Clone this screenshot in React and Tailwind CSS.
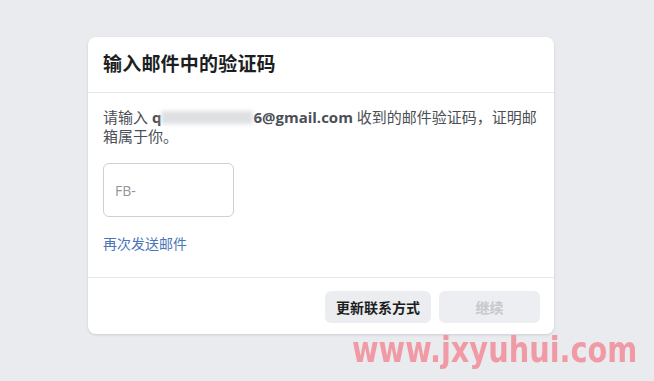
export default function App() {
  return (
    <div className="relative w-[654px] h-[381px] bg-[#e9ebee] overflow-hidden pt-[37px] pl-[88px] font-[Open_Sans,Noto_Sans_CJK_SC,sans-serif]">
      <div className="w-[466px] h-[297px] bg-white rounded-[8px] shadow-[0_1px_3px_rgba(0,0,0,0.12)] flex flex-col">
        <div className="h-[56px] flex items-center px-[15px] border-b border-[#e5e7ea]">
          <h1 className="text-[19px] font-bold text-[#1c1e21] leading-none tracking-[0.2px]">输入邮件中的验证码</h1>
        </div>
        <div className="flex-1 px-[15px] pt-[15px] flex flex-col">
          <p className="text-[15px] leading-[19px] text-[#4b4f56]">
            请输入 <span className="font-bold text-[#4b4f56]">q</span>
            <span className="inline-block w-[92px] h-[13px] bg-[#d6d8dc] blur-[2px] align-[-1px] opacity-80"></span>
            <span className="font-bold text-[#4b4f56]">6@gmail.com</span> 收到的邮件验证码，证明邮
            <br />
            箱属于你。
          </p>
          <div className="mt-[17px] w-[131px] h-[54px] border border-[#ccd0d5] rounded-[6px] flex items-center pl-[11px]">
            <span className="text-[14px] text-[#90949c]">FB-</span>
          </div>
          <div className="mt-[18px] text-[14px] leading-[18px] text-[#4a74b8]">再次发送邮件</div>
        </div>
        <div className="h-[57px] border-t border-[#e5e7ea] flex justify-end items-start pt-[13px] pr-[14px] gap-[8px]">
          <button className="w-[106px] h-[32px] rounded-[6px] bg-[#ebedf0] text-[14px] font-bold text-[#1c1e21]">更新联系方式</button>
          <button className="w-[101px] h-[32px] rounded-[6px] bg-[#eceef1] text-[14px] font-bold text-[#c5c8cc]">继续</button>
        </div>
      </div>
      <div className="absolute left-[352px] top-[332px] text-[36px] font-bold leading-none text-[#f09aa5] font-[DejaVu_Sans,sans-serif] origin-left scale-x-[0.80] whitespace-nowrap">
        www.jxyuhui.com
      </div>
    </div>
  );
}
